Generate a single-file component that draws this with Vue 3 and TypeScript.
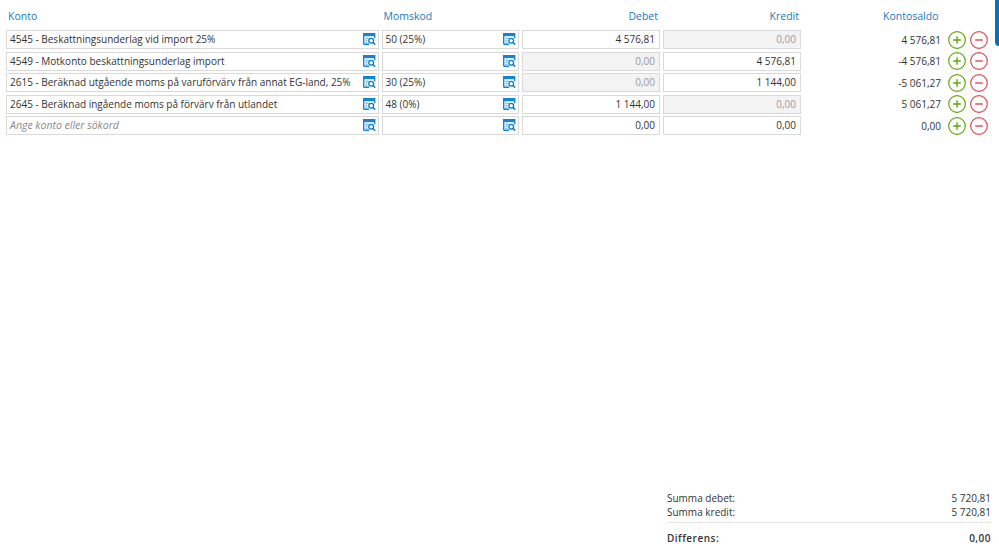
<script setup lang="ts">
interface Row {
  konto: string;
  moms: string;
  debet: string;
  kredit: string;
  saldo: string;
  debetOff?: boolean;
  kreditOff?: boolean;
}

const rows: Row[] = [
  { konto: "4545 - Beskattningsunderlag vid import 25%", moms: "50 (25%)", debet: "4 576,81", kredit: "0,00", saldo: "4 576,81", kreditOff: true },
  { konto: "4549 - Motkonto beskattningsunderlag import", moms: "", debet: "0,00", kredit: "4 576,81", saldo: "-4 576,81", debetOff: true },
  { konto: "2615 - Beräknad utgående moms på varuförvärv från annat EG-land, 25%", moms: "30 (25%)", debet: "0,00", kredit: "1 144,00", saldo: "-5 061,27", debetOff: true },
  { konto: "2645 - Beräknad ingående moms på förvärv från utlandet", moms: "48 (0%)", debet: "1 144,00", kredit: "0,00", saldo: "5 061,27", kreditOff: true },
  { konto: "", moms: "", debet: "0,00", kredit: "0,00", saldo: "0,00" },
];
</script>

<template>
  <div class="page">
    <span class="scroll-tab"></span>
    <div class="grid head">
      <div class="h-konto">Konto</div>
      <div class="h-moms">Momskod</div>
      <div class="h-num">Debet</div>
      <div class="h-num">Kredit</div>
      <div class="h-saldo">Kontosaldo</div>
    </div>

    <div class="rows">
      <div v-for="(row, i) in rows" :key="i" class="grid row">
        <div class="field lookup">
          <span v-if="row.konto" class="text">{{ row.konto }}</span>
          <span v-else class="text hint">Ange konto eller sökord</span>
          <svg class="search" width="13" height="12" viewBox="0 0 13 12">
            <path d="M.7 11.3V.7h11v4.6M.7 11.3h5.4" fill="none" stroke="#0f86d6" stroke-width="1.4" />
            <path d="M.6.6h11.2v2.6H.6z" fill="#0f86d6" />
            <path d="M2.4 5.2h3.4M2.4 7.2h2M2.4 9.2h2" stroke="#4aa6e4" stroke-width="1" />
            <circle cx="8.2" cy="7.8" r="2.4" fill="#fff" stroke="#0d78c2" stroke-width="1.3" />
            <path d="M9.9 9.5l2.3 2.1" stroke="#0d78c2" stroke-width="1.5" />
          </svg>
        </div>
        <div class="field lookup">
          <span class="text">{{ row.moms }}</span>
          <svg class="search" width="13" height="12" viewBox="0 0 13 12">
            <path d="M.7 11.3V.7h11v4.6M.7 11.3h5.4" fill="none" stroke="#0f86d6" stroke-width="1.4" />
            <path d="M.6.6h11.2v2.6H.6z" fill="#0f86d6" />
            <path d="M2.4 5.2h3.4M2.4 7.2h2M2.4 9.2h2" stroke="#4aa6e4" stroke-width="1" />
            <circle cx="8.2" cy="7.8" r="2.4" fill="#fff" stroke="#0d78c2" stroke-width="1.3" />
            <path d="M9.9 9.5l2.3 2.1" stroke="#0d78c2" stroke-width="1.5" />
          </svg>
        </div>
        <div class="field num" :class="{ off: row.debetOff }">{{ row.debet }}</div>
        <div class="field num" :class="{ off: row.kreditOff }">{{ row.kredit }}</div>
        <div class="saldo">
          <span>{{ row.saldo }}</span>
          <svg class="round" width="18" height="18" viewBox="0 0 18 18">
            <circle cx="9" cy="9" r="8.3" fill="none" stroke="#62a60e" stroke-width="1.2" />
            <path d="M5.2 9h7.6M9 5.2v7.6" stroke="#62a60e" stroke-width="1.4" />
          </svg>
          <svg class="round" width="18" height="18" viewBox="0 0 18 18">
            <circle cx="9" cy="9" r="8.3" fill="none" stroke="#dc4b50" stroke-width="1.2" />
            <path d="M5.2 9h7.6" stroke="#dc4b50" stroke-width="1.4" />
          </svg>
        </div>
      </div>
    </div>

    <div class="totals">
      <div class="line"><span>Summa debet:</span><span>5 720,81</span></div>
      <div class="line"><span>Summa kredit:</span><span>5 720,81</span></div>
      <div class="line diff"><span>Differens:</span><span>0,00</span></div>
    </div>
  </div>
</template>

<style>
body {
  margin: 0;
  background: #fff;
}
</style>

<style scoped>
.page {
  position: relative;
  box-sizing: border-box;
  height: 554px;
  display: flex;
  flex-direction: column;
  padding: 0 8px 9px 6px;
  overflow: hidden;
  font-family: "Open Sans", sans-serif;
  font-size: 10px;
  color: #333;
}

.scroll-tab {
  position: absolute;
  top: -4px;
  right: 0;
  width: 4px;
  height: 50px;
  background: #0b6fb3;
  border-radius: 4px 0 0 4px;
}

.grid {
  display: grid;
  grid-template-columns: 372.5px 137.5px 138px 138px 183.5px;
  column-gap: 3px;
}

.head {
  height: 30px;
  box-sizing: border-box;
  padding-top: 9px;
  line-height: 15px;
  font-size: 10.5px;
  color: #1a7abb;
}

.h-konto,
.h-moms {
  padding-left: 2px;
}

.h-num {
  text-align: right;
  padding-right: 2px;
}

.h-saldo {
  padding-left: 79px;
}

.rows {
  display: flex;
  flex-direction: column;
  gap: 2.5px;
}

.row {
  height: 19px;
}

.field {
  box-sizing: border-box;
  height: 19px;
  border: 1px solid #d9d9d9;
  background: #fff;
  line-height: 17px;
  white-space: nowrap;
  overflow: hidden;
}

.lookup {
  display: flex;
  align-items: center;
  justify-content: space-between;
  padding: 0 2px 0 3px;
}

.text {
  flex: 1;
}

.hint {
  font-size: 10.5px;
  font-style: italic;
  color: #8a8a8a;
}

.search {
  flex-shrink: 0;
  margin-bottom: 1px;
}

.num {
  text-align: right;
  padding-right: 4px;
}

.off {
  background: #f3f3f3;
  color: #9a9a9a;
}

.saldo {
  display: flex;
  align-items: center;
  justify-content: flex-end;
  gap: 3.5px;
}

.saldo span {
  margin-right: 3.5px;
}

.round {
  flex-shrink: 0;
}

.totals {
  margin-top: auto;
  margin-left: 661px;
}

.line {
  display: flex;
  justify-content: space-between;
  line-height: 14px;
}

.diff {
  margin-top: 3px;
  padding-top: 8px;
  border-top: 1px solid #e4e4e4;
  font-weight: 600;
  letter-spacing: 0.5px;
}
</style>
